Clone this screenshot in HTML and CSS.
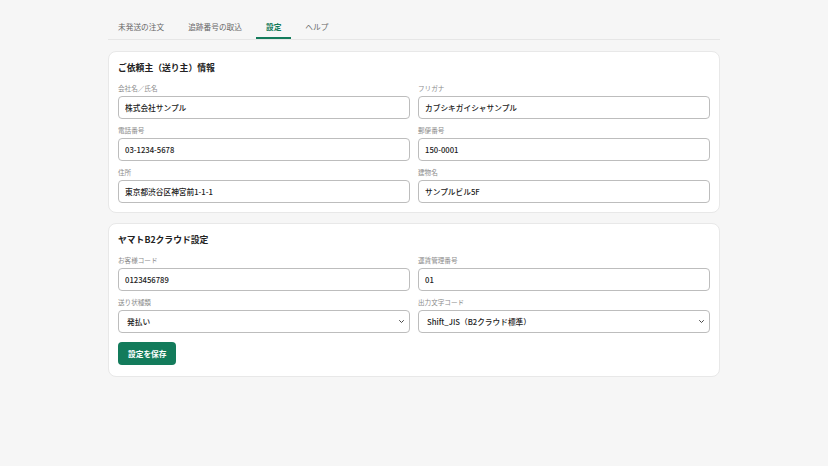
FILE: index.html
```html
<!DOCTYPE html>
<html lang="ja">
<head>
    <meta charset="UTF-8">
    <meta name="viewport" content="width=device-width, initial-scale=1.0">
    <title>設定</title>
    <link rel="stylesheet" href="styles.css">
</head>
<body>
    <div class="page">
        <nav class="tabs">
            <a class="tab" href="#">未発送の注文</a>
            <a class="tab" href="#">追跡番号の取込</a>
            <a class="tab active" href="#">設定</a>
            <a class="tab" href="#">ヘルプ</a>
        </nav>

        <section class="card">
            <h2>ご依頼主（送り主）情報</h2>
            <div class="grid">
                <div class="field">
                    <label for="name">会社名／氏名</label>
                    <input type="text" id="name" value="株式会社サンプル">
                </div>
                <div class="field">
                    <label for="kana">フリガナ</label>
                    <input type="text" id="kana" value="カブシキガイシャサンプル">
                </div>
                <div class="field">
                    <label for="tel">電話番号</label>
                    <input type="text" id="tel" value="03-1234-5678">
                </div>
                <div class="field">
                    <label for="zip">郵便番号</label>
                    <input type="text" id="zip" value="150-0001">
                </div>
                <div class="field">
                    <label for="addr">住所</label>
                    <input type="text" id="addr" value="東京都渋谷区神宮前1-1-1">
                </div>
                <div class="field">
                    <label for="bldg">建物名</label>
                    <input type="text" id="bldg" value="サンプルビル5F">
                </div>
            </div>
        </section>

        <section class="card card-b2">
            <h2>ヤマトB2クラウド設定</h2>
            <div class="grid">
                <div class="field">
                    <label for="code">お客様コード</label>
                    <input type="text" id="code" value="0123456789">
                </div>
                <div class="field">
                    <label for="fare">運賃管理番号</label>
                    <input type="text" id="fare" value="01">
                </div>
                <div class="field">
                    <label for="type">送り状種類</label>
                    <select id="type">
                        <option>発払い</option>
                        <option>コレクト</option>
                        <option>着払い</option>
                    </select>
                </div>
                <div class="field">
                    <label for="enc">出力文字コード</label>
                    <select id="enc">
                        <option>Shift_JIS（B2クラウド標準）</option>
                        <option>UTF-8</option>
                    </select>
                </div>
            </div>
            <button class="save" type="button">設定を保存</button>
        </section>
    </div>
</body>
</html>
```

FILE: styles.css
```css
body {
    margin: 0;
    font-family: "Noto Sans CJK JP", "Noto Sans", sans-serif;
    background-color: #f6f6f6;
    color: #222;
}
.page {
    max-width: 612px;
    margin: 0 auto;
    padding-top: 14px;
}
.tabs {
    display: flex;
    gap: 4px;
    border-bottom: 1px solid #e6e6e6;
    margin-bottom: 11px;
}
.tab {
    padding: 7px 10px 5px;
    font-size: 7.7px;
    line-height: 11px;
    color: #666;
    text-decoration: none;
    border-bottom: 2px solid transparent;
}
.tab.active {
    color: #137b5b;
    font-weight: bold;
    border-bottom-color: #137b5b;
}
.card {
    background-color: #fff;
    border: 1px solid #e8e8e8;
    border-radius: 8px;
    padding: 9px;
    margin-bottom: 10px;
}
.card-b2 {
    padding-bottom: 11px;
}
.card h2 {
    margin: 0 0 9px;
    font-size: 8.8px;
    line-height: 13px;
    font-weight: bold;
    color: #222;
}
.grid {
    display: grid;
    grid-template-columns: 1fr 1fr;
    column-gap: 8px;
    row-gap: 6px;
}
.field label {
    display: block;
    font-size: 6.6px;
    line-height: 10px;
    color: #8c8c8c;
    margin-bottom: 3px;
}
.field input,
.field select {
    display: block;
    width: 100%;
    height: 23px;
    box-sizing: border-box;
    border: 1px solid #bdbdbd;
    border-radius: 4px;
    background-color: #fff;
    font-family: inherit;
    font-size: 7.7px;
    font-weight: 500;
    color: #222;
    margin: 0;
}
.field input {
    padding: 0 6px;
}
.field select {
    appearance: none;
    -webkit-appearance: none;
    padding: 0 16px 0 8px;
    background-image: url("data:image/svg+xml,%3Csvg xmlns='http://www.w3.org/2000/svg' viewBox='0 0 10 6'%3E%3Cpath d='M1 1l4 4 4-4' fill='none' stroke='%23333' stroke-width='1.8' stroke-linecap='round' stroke-linejoin='round'/%3E%3C/svg%3E");
    background-repeat: no-repeat;
    background-position: right 5px center;
    background-size: 5px 3px;
}
.save {
    margin-top: 9px;
    height: 23px;
    padding: 0 10px;
    border: none;
    border-radius: 4px;
    background-color: #137b5b;
    color: #fff;
    font-family: inherit;
    font-size: 7.7px;
    font-weight: bold;
    cursor: pointer;
}
```
